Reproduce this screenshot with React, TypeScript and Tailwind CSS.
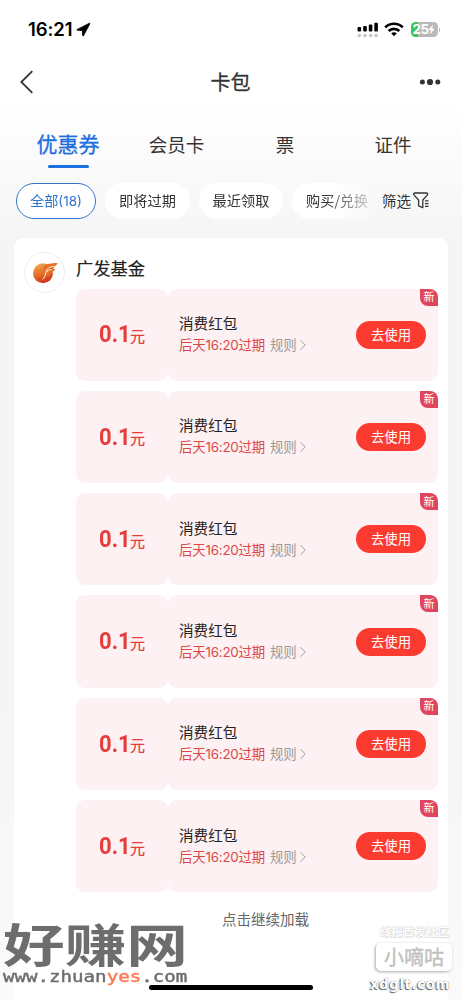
import { ChevronRight } from 'lucide-react';

const tabs = [
  { label: '优惠券', active: true, className: 'w-[64px] ml-[36px]' },
  { label: '会员卡', active: false, className: 'w-[57px] ml-[48px]' },
  { label: '票', active: false, className: 'w-[20px] ml-[70px]' },
  { label: '证件', active: false, className: 'w-[40px] ml-[78px]' },
];

const coupons = Array.from({ length: 6 }, (_, i) => ({
  id: i,
  amount: '0.1',
  title: '消费红包',
  expires: '后天16:20过期',
}));

function StatusBar() {
  return (
    <div className="flex h-[56px] items-center pl-[28px] pr-[22px] pt-[3px]">
      <span className="font-['Inter'] text-[18.5px] font-semibold tracking-[-0.1px] text-black">16:21</span>
      <svg className="ml-[4px] h-[15px] w-[15px]" viewBox="0 0 15 15" fill="#000">
        <path
          d="M13.400 1.200 1.200 7.400c-.5.3-.4.9.2.9l5 .2.2 4.900c0 .6.700.7 1 .2L13.900 1.700c.1-.3-.1-.6-.5-.5Z"
          stroke="#000"
          strokeWidth="0.8"
        />
      </svg>
      <svg className="ml-auto h-[16px] w-[22px]" viewBox="0 0 22 16">
        <g fill="#000">
          <rect x="0.5" y="5" width="3.6" height="4.5" rx="1" />
          <rect x="6.2" y="4" width="3.6" height="5.5" rx="1" />
          <rect x="11.8" y="2.5" width="3.6" height="7" rx="1" />
          <rect x="17.3" y="0.7" width="3.6" height="8.8" rx="1" />
        </g>
        <g fill="#c9c9c9">
          <circle cx="2.3" cy="13.6" r="1.8" />
          <circle cx="8" cy="13.6" r="1.8" />
          <circle cx="13.6" cy="13.6" r="1.8" />
          <circle cx="19.1" cy="13.6" r="1.8" />
        </g>
      </svg>
      <svg className="ml-[5px] h-[15px] w-[20px]" viewBox="0 0 20 15" fill="none" stroke="#000" strokeWidth="2.7">
        <path d="M1.2 5.4C6.2.5 13.8.5 18.8 5.4" />
        <path d="M4.6 9c3.1-2.9 7.7-2.9 10.8 0" />
        <path d="m10 14.2-2.8-2.9c1.6-1.4 4-1.4 5.6 0L10 14.2Z" fill="#000" stroke="none" />
      </svg>
      <div className="ml-[7px] flex h-[15px] w-[27px] items-center justify-center rounded-[4.5px] bg-[linear-gradient(90deg,#3bc45c_26%,#b9b9b9_26%)] text-white">
        <span className="font-['Inter'] text-[13.5px] font-bold leading-[15px] tracking-[-0.6px]">25</span>
        <svg className="h-[11px] w-[7px]" viewBox="0 0 7 10" fill="#fff">
          <path d="M5 0 .3 5.6h2.5L2 10l4.7-5.8H4.2L5 0Z" />
        </svg>
      </div>
      <span className="ml-px h-[4px] w-[1.5px] rounded-r bg-[#b9b9b9]" />
    </div>
  );
}

function NavBar() {
  return (
    <header className="flex h-[52px] items-center justify-between pl-[20px] pr-[21px]">
      <svg className="h-[24px] w-[22px]" viewBox="0 0 22 24" fill="none" stroke="#333" strokeWidth="1.8">
        <path d="M12.3 1.2 1.3 12l11 10.8" />
      </svg>
      <h1 className="text-[20px] leading-none text-[#333] [-webkit-text-stroke:0.3px_currentColor]">卡包</h1>
      <svg className="h-[8px] w-[22px]" viewBox="0 0 22 8" fill="#333">
        <circle cx="3.4" cy="4" r="2.5" />
        <circle cx="11" cy="4" r="3.1" />
        <circle cx="18.8" cy="4" r="2.5" />
      </svg>
    </header>
  );
}

function Tabs() {
  return (
    <nav className="flex h-[60px] pt-[16px]">
      {tabs.map((tab) => (
        <div key={tab.label} className={`flex flex-col items-center whitespace-nowrap ${tab.className}`}>
          {tab.active ? (
            <>
              <span className="text-[21px] leading-[33px] text-[#1b6fe0] [-webkit-text-stroke:0.3px_currentColor]">{tab.label}</span>
              <span className="mt-[5px] h-[2.5px] w-[41px] rounded-full bg-[#1b6fe0]" />
            </>
          ) : (
            <span className="text-[18.5px] leading-[34px] text-[#333]">{tab.label}</span>
          )}
        </div>
      ))}
    </nav>
  );
}

function Filters() {
  return (
    <div className="mt-[12px] flex h-[37px] items-center pl-[16px] text-[14.2px] text-[#333]">
      <div className="flex h-full w-[351px] gap-[9px] overflow-hidden whitespace-nowrap [mask-image:linear-gradient(90deg,#000_310px,transparent_365px)]">
        <button className="h-[36px] w-[80px] shrink-0 rounded-full border-[1.3px] border-[#2f75cc] bg-white text-[#2f75cc]">
          全部<span className="font-['Inter'] text-[13.5px]">(18)</span>
        </button>
        <button className="h-[36px] w-[85px] shrink-0 rounded-full bg-white">即将过期</button>
        <button className="h-[36px] w-[84px] shrink-0 rounded-full bg-white">最近领取</button>
        <button className="h-[36px] w-[110px] shrink-0 rounded-full bg-white pl-[14px] text-left">购买/兑换</button>
      </div>
      <button className="-mt-[2px] ml-[15px] flex items-center gap-[2px] text-[14.5px]">
        筛选
        <svg className="h-[17px] w-[16px]" viewBox="0 0 16 17" fill="none" stroke="#333" strokeWidth="1.3">
          <path d="M9.8 15.7 5.6 13.8V8L.9 2.9C.3 2.1.8 1 1.8 1h11.7c1 0 1.5 1.1.9 1.9L9.8 8v7.7Z" strokeLinejoin="round" />
          <path d="M12 8.8h3.5M12 11.6h3.5M12 14.4h3.5" />
        </svg>
      </button>
    </div>
  );
}

function FundLogo() {
  return (
    <div className="flex h-[41px] w-[41px] shrink-0 items-center justify-center rounded-full border border-[#eeeeee] bg-white">
      <svg className="h-[22px] w-[26px]" viewBox="0 0 26 22">
        <defs>
          <linearGradient id="flame" x1="0.3" y1="0" x2="0.6" y2="1">
            <stop offset="0" stopColor="#f0a850" />
            <stop offset="0.5" stopColor="#e5702b" />
            <stop offset="1" stopColor="#c9301a" />
          </linearGradient>
        </defs>
        <circle cx="11" cy="11.3" r="10" fill="url(#flame)" />
        <path
          d="M12 4C15 1.300 19 1.200 25.400.9c-.4 2-1.700 3-3.200 3.500-.2 1.500-.6 2-1.200 2.400l2.200.1c-.8 2-2.200 2.900-3.700 3.200l-3 4.200L11 12Z"
          fill="#e5702b"
        />
        <path
          d="M10.500 17.500c2.200-1.600 2.700-4.200 3.300-7C14.500 7 17 4.700 22.200 4.400M14.200 10.500c1-1.900 2.400-2.700 5.500-2.900"
          fill="none"
          stroke="#fff0d2"
          strokeWidth="1"
        />
      </svg>
    </div>
  );
}

function Coupon({ amount, title, expires }: { amount: string; title: string; expires: string }) {
  return (
    <div className="relative flex h-[92.3px]">
      <div className="flex w-[92px] items-center justify-center rounded-[9px] bg-[#fef1f3] text-[#e53d3b]">
        <span className="inline-block w-[31px] origin-left scale-x-[0.9] font-['Roboto'] text-[24.5px] font-bold leading-none">
          {amount}
        </span>
        <span className="mt-[2px] text-[15px] leading-none [-webkit-text-stroke:0.2px_currentColor]">元</span>
      </div>
      <div className="flex flex-1 items-center rounded-[9px] bg-[#fef1f3] pl-[11px] pr-[12px]">
        <div className="-mt-px flex-1">
          <div className="text-[14.6px] leading-[22px] text-[#222]">{title}</div>
          <div className="flex items-center whitespace-nowrap font-['Inter','Noto_Sans_CJK_SC',sans-serif] text-[13.4px] leading-[22px] tracking-[-0.2px] text-[#dc4744]">
            {expires}
            <span className="ml-[5px] text-[#999]">规则</span>
            <ChevronRight className="-ml-[2px] h-[18px] w-[18px] text-[#999]" strokeWidth={1.3} />
          </div>
        </div>
        <button className="h-[28px] w-[70px] rounded-full bg-[#fc3b30] pb-px text-[13.4px] leading-[27px] text-white">
          去使用
        </button>
      </div>
      <span className="absolute right-0 top-0 flex h-[17px] w-[18px] items-center justify-center rounded-bl-[8px] rounded-tr-[8px] bg-[#e04560] pb-px text-[11px] leading-none text-white">
        新
      </span>
    </div>
  );
}

function SiteMark() {
  return (
    <div className="absolute left-[3px] top-[920px] whitespace-nowrap text-[#6d6d6d]">
      <div className="h-[50px] w-[138px] origin-top-left scale-x-[1.34] text-[46px] font-bold leading-[45px]">好赚网</div>
      <div className="w-[144px] origin-top-left scale-x-[1.275] font-['DejaVu_Sans_Mono'] text-[15px] leading-[15px] [-webkit-text-stroke:0.4px_currentColor]">
        www.zhuan<span className="text-[#ff7753]">yes</span>.com
      </div>
    </div>
  );
}

function CommunityMark() {
  return (
    <div className="absolute left-[366px] top-[924px] flex w-[88px] flex-col items-end whitespace-nowrap text-white">
      <span className="mr-[5px] text-[11.5px] font-bold leading-[14px] [text-shadow:0_0_1px_#bbb,1px_1px_1px_#ddd]">线报首发社区</span>
      <div className="mr-[2px] mt-[5px] flex h-[28px] w-[76px] items-center justify-center rounded-[5px] bg-white text-[20px] text-[#c0c0c0] shadow-[-1px_1px_3px_#aaa] [-webkit-text-stroke:0.4px_currentColor]">
        小嘀咕
      </div>
      <span className="mr-[4px] mt-[4px] font-['DejaVu_Sans'] text-[13.5px] font-bold leading-[18px] tracking-[0.5px] [text-shadow:0_0_1px_#555,-1px_1px_1px_#666]">
        xdglt.com
      </span>
    </div>
  );
}

export default function App() {
  return (
    <div className="relative h-[1000px] w-[462px] overflow-hidden bg-[linear-gradient(180deg,#fff_100px,#f5f5f5_245px,#f5f5f5_700px,#fafafa_1000px)] font-['Noto_Sans_CJK_SC',sans-serif]">
      <StatusBar />
      <NavBar />
      <div className="h-[3px]" />
      <Tabs />
      <Filters />
      <main className="ml-[14px] mt-[18px] flex h-[762px] w-[434px] rounded-t-[9px] bg-white pl-[10px] pr-[10px] pt-[14px]">
        <FundLogo />
        <section className="ml-[11px] flex-1">
          <h2 className="h-[36.5px] text-[17.3px] leading-[31px] text-[#222] [-webkit-text-stroke:0.2px_currentColor]">广发基金</h2>
          <div className="flex flex-col gap-[10px]">
            {coupons.map((coupon) => (
              <Coupon key={coupon.id} amount={coupon.amount} title={coupon.title} expires={coupon.expires} />
            ))}
          </div>
          <p className="ml-[146px] mt-[15px] text-[14.5px] leading-[24px] text-[#666]">点击继续加载</p>
        </section>
      </main>
      <SiteMark />
      <CommunityMark />
      <div className="absolute left-[149px] top-[985px] h-[5px] w-[164px] rounded-full bg-black" />
    </div>
  );
}
